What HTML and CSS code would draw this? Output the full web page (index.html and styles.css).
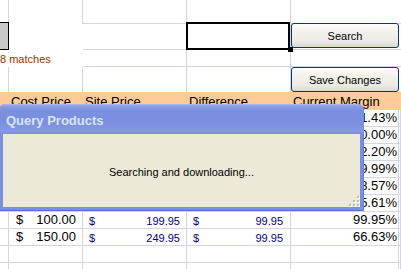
FILE: index.html
```html
<!DOCTYPE html>
<html lang="en">
<head>
  <meta charset="UTF-8">
  <meta name="viewport" content="width=device-width, initial-scale=1.0">
  <title>Query Products</title>
  <link rel="stylesheet" href="styles.css">
</head>
<body>
  <div class="sheet">
    <!-- row 1 -->
    <div class="cell nb"></div>
    <div class="cell nb"></div>
    <div class="cell"></div>
    <div class="cell"></div>
    <div class="cell nr"></div>
    <div class="cell nr"></div>

    <!-- row 2: search box + button -->
    <div class="cell knob"></div>
    <div class="cell nr nb"></div>
    <div class="cell"></div>
    <div class="cell active"></div>
    <div class="cell nr"><button class="xp-button search-button">Search</button></div>
    <div class="cell nr"></div>

    <!-- row 3 -->
    <div class="cell nr nb matches">8 matches</div>
    <div class="cell"></div>
    <div class="cell"></div>
    <div class="cell nr"></div>
    <div class="cell nr"></div>

    <!-- row 4 -->
    <div class="cell nb"></div>
    <div class="cell nb"></div>
    <div class="cell nb"></div>
    <div class="cell nb"></div>
    <div class="cell nr nb"><button class="xp-button">Save Changes</button></div>
    <div class="cell nr nb"></div>

    <!-- header -->
    <div class="cell head"></div>
    <div class="cell head">Cost Price</div>
    <div class="cell head">Site Price</div>
    <div class="cell head">Difference</div>
    <div class="cell head">Current Margin</div>
    <div class="cell head"></div>
  </div>

  <div class="dialog">
    <div class="dialog-title">Query Products</div>
    <div class="dialog-body">
      Searching and downloading...
      <svg class="grip" width="12" height="12" viewBox="0 0 12 12">
        <g fill="#fff">
          <rect x="10" y="2" width="2" height="2"/>
          <rect x="6" y="6" width="2" height="2"/>
          <rect x="10" y="6" width="2" height="2"/>
          <rect x="2" y="10" width="2" height="2"/>
          <rect x="6" y="10" width="2" height="2"/>
          <rect x="10" y="10" width="2" height="2"/>
        </g>
        <g fill="#c2bda9">
          <rect x="9" y="1" width="2" height="2"/>
          <rect x="5" y="5" width="2" height="2"/>
          <rect x="9" y="5" width="2" height="2"/>
          <rect x="1" y="9" width="2" height="2"/>
          <rect x="5" y="9" width="2" height="2"/>
          <rect x="9" y="9" width="2" height="2"/>
        </g>
      </svg>
    </div>
  </div>

  <script>
    // cost, site price, difference, margin
    // (prices of the first rows sit under the dialog, only the margin shows)
    const products = [
      ['', '', '', '31.43%'],
      ['', '', '', '50.00%'],
      ['', '', '', '22.20%'],
      ['', '', '', '49.99%'],
      ['', '', '', '28.57%'],
      ['', '', '', '35.61%'],
      ['100.00', '199.95', '99.95', '99.95%'],
      ['150.00', '249.95', '99.95', '66.63%'],
      null,
      null
    ];

    const sheet = document.querySelector('.sheet');

    function addCell(className, html) {
      const cell = document.createElement('div');
      cell.className = 'cell ' + className;
      if (html) cell.innerHTML = html;
      sheet.appendChild(cell);
    }

    function money(value) {
      if (!value) return '';
      return '<span>$</span><span>' + value + '</span>';
    }

    products.forEach(p => {
      addCell('');
      addCell('money', p ? money(p[0]) : '');
      addCell('money blue', p ? money(p[1]) : '');
      addCell('money blue diff', p ? money(p[2]) : '');
      addCell('pct', p ? p[3] : '');
      addCell('');
    });
  </script>
</body>
</html>
```

FILE: styles.css
```css
html, body {
  margin: 0;
  padding: 0;
  overflow: hidden;
  background-color: #fff;
  font-family: "Liberation Sans", Arial, sans-serif;
}

.sheet {
  display: grid;
  grid-template-columns: 9px 74px 104px 104px 108px 1fr;
  grid-template-rows: 24px 26px 17px 25px 18px repeat(10, 17px);
}

.cell {
  box-sizing: border-box;
  border-right: 1px solid #d5d3e6;
  border-bottom: 1px solid #d5d3e6;
  white-space: nowrap;
  font-size: 13px;
  line-height: 16px;
  color: #000;
}

.nr {
  border-right: none;
}

.nb {
  border-bottom: none;
}

/* grey control sticking out at the left edge */
.knob {
  margin-top: -2px;
  background-color: #c8c8c8;
  border-top: 1px solid #000;
  border-right: 1px solid #000;
  border-bottom: 1px solid #000;
}

.active {
  position: relative;
}

.active::after {
  content: "";
  position: absolute;
  left: -1px;
  top: -2px;
  right: 0;
  bottom: -1px;
  border: 2px solid #000;
}

.active::before {
  content: "";
  position: absolute;
  right: -3px;
  bottom: -3px;
  width: 5px;
  height: 5px;
  background-color: #000;
  z-index: 1;
}

.matches {
  grid-column: span 2;
  font-size: 11px;
  line-height: 19px;
  color: #993300;
}

.xp-button {
  display: block;
  width: 100%;
  height: 100%;
  margin: 0;
  padding: 1px 0 0;
  box-sizing: border-box;
  border: 1px solid #003c74;
  border-radius: 3px;
  background: linear-gradient(#fdfdfb, #f3f2ec 30%, #ecebe3 75%, #dcd8c9);
  font-family: "Liberation Sans", Arial, sans-serif;
  font-size: 11px;
  color: #000;
}

.search-button {
  margin-top: -1px;
}

.head {
  background-color: #ffcc99;
  border-right: none;
  padding: 1px 0 0 2px;
  line-height: 18px;
}

.money {
  display: flex;
  justify-content: space-between;
  padding: 0 6px 0 7px;
}

.blue {
  font-size: 11px;
  line-height: 18px;
  color: #000080;
  padding: 0 6px;
}

.blue.diff {
  padding: 0 7px 0 6px;
}

.pct {
  text-align: right;
  padding-right: 1px;
}

/* modal window */
.dialog {
  position: absolute;
  left: -1px;
  top: 104px;
  width: 365px;
  height: 107px;
  display: flex;
  flex-direction: column;
  background-color: #7b8fdf;
  border-radius: 7px 7px 0 0;
  overflow: hidden;
  box-shadow: inset 1px 0 #6a7dd6, inset -1px 0 #6a7dd6, inset 0 -1px #5a6cd0;
  z-index: 5;
}

.dialog-title {
  height: 30px;
  box-sizing: border-box;
  padding: 4px 0 0 7px;
  line-height: 26px;
  font-size: 13px;
  font-weight: bold;
  color: #d8e4f8;
  background: linear-gradient(#aebdf0, #8a9de4 2px, #7a8fdf 7px, #7b8fdf 18px, #8598e3 27px, #7b8fdf 30px);
}

.dialog-body {
  position: relative;
  flex: 1;
  margin: 0 4px 4px;
  padding-top: 3px;
  display: flex;
  align-items: center;
  justify-content: center;
  background-color: #ece9d8;
  font-size: 11px;
  color: #000;
}

.grip {
  position: absolute;
  right: 0;
  bottom: 0;
}
```
